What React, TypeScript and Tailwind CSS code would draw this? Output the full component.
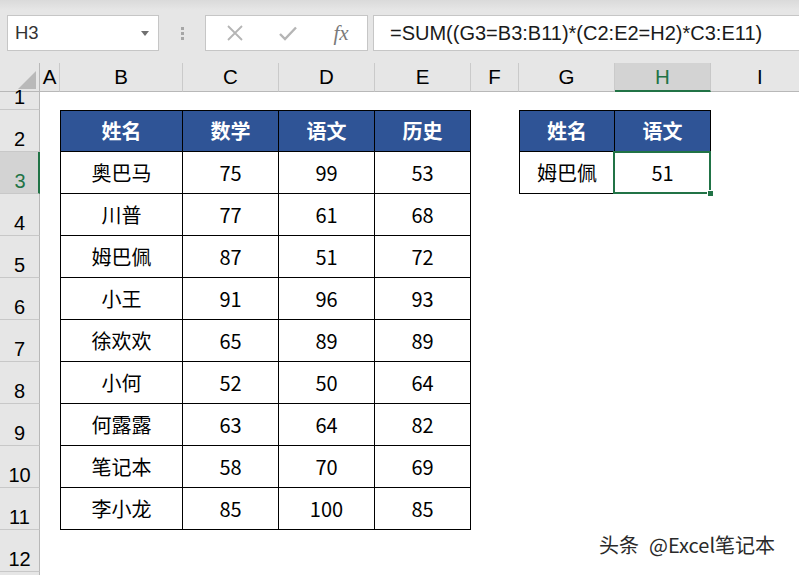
import React from "react";

const COLS = ["A", "B", "C", "D", "E", "F", "G", "H", "I"];

const DATA: [string, number, number, number][] = [
  ["奥巴马", 75, 99, 53],
  ["川普", 77, 61, 68],
  ["姆巴佩", 87, 51, 72],
  ["小王", 91, 96, 93],
  ["徐欢欢", 65, 89, 89],
  ["小何", 52, 50, 64],
  ["何露露", 63, 64, 82],
  ["笔记本", 58, 70, 69],
  ["李小龙", 85, 100, 85],
];

const HEAD = ["姓名", "数学", "语文", "历史"];

function cellContent(r: number, c: number): string {
  if (r === 2 && c >= 1 && c <= 4) return HEAD[c - 1];
  if (r >= 3 && r <= 11 && c >= 1 && c <= 4) {
    const row = DATA[r - 3];
    return String(row[c - 1]);
  }
  if (r === 2 && c === 6) return "姓名";
  if (r === 2 && c === 7) return "语文";
  if (r === 3 && c === 6) return "姆巴佩";
  if (r === 3 && c === 7) return "51";
  return "";
}

function isTable(r: number, c: number) {
  return (r >= 2 && r <= 11 && c >= 1 && c <= 4) || (r >= 2 && r <= 3 && c >= 6 && c <= 7);
}

function Cell({ r, c }: { r: number; c: number }) {
  if (!isTable(r, c)) return <div className="bg-white" />;
  const header = r === 2;
  const cls = [
    "relative flex items-center justify-center border-black border-r border-b text-[20px] font-['Noto_Sans_CJK_SC',sans-serif]",
    c === 1 || c === 6 ? "border-l" : "",
    r === 2 ? "border-t" : "",
    header ? "bg-[#2f5496] text-white font-bold" : "bg-white text-black",
  ].join(" ");
  const selected = r === 3 && c === 7;
  return (
    <div className={cls}>
      <span className="leading-none">{cellContent(r, c)}</span>
      {selected && (
        <>
          <div className="pointer-events-none absolute -left-[2px] -top-[1px] -right-[1px] -bottom-[1px] border-2 border-[#217346]" />
          <div className="absolute -right-[4px] -bottom-[4px] h-[7px] w-[7px] bg-[#217346] border border-white" />
        </>
      )}
    </div>
  );
}

export default function App() {
  const rows = Array.from({ length: 12 }, (_, i) => i + 1);
  return (
    <div className="relative h-[575px] w-[799px] overflow-hidden bg-white font-['Liberation_Sans',Arial,sans-serif]">
      {/* formula bar */}
      <div className="flex h-[63px] items-start bg-[linear-gradient(#dadada,#e6e6e6_10px,#e6e6e6)] pl-[7px] pt-[15px]">
        <div className="flex h-[36px] w-[152px] items-center justify-between border border-[#c6c6c6] bg-white pl-[7px] pr-[9px]">
          <span className="text-[18.5px] text-[#333]">H3</span>
          <svg width="8" height="5" viewBox="0 0 8 5">
            <path d="M0 0 L8 0 L4 5 Z" fill="#707070" />
          </svg>
        </div>
        <div className="flex h-[36px] w-[46px] flex-col items-center justify-center gap-[2px]">
          <div className="h-[3px] w-[3px] bg-[#a6a6a6]" />
          <div className="h-[3px] w-[3px] bg-[#a6a6a6]" />
          <div className="h-[3px] w-[3px] bg-[#a6a6a6]" />
        </div>
        <div className="flex h-[36px] w-[163px] items-center border border-[#c6c6c6] bg-white">
          <div className="flex w-[55px] justify-center pl-[2px]">
            <svg width="16" height="16" viewBox="0 0 16 16">
              <path d="M1 1 L15 15 M15 1 L1 15" stroke="#b5b5b5" strokeWidth="1.8" />
            </svg>
          </div>
          <div className="flex w-[54px] justify-center">
            <svg width="18" height="15" viewBox="0 0 18 15">
              <path d="M1 8 L6 13 L17 1.5" stroke="#b5b5b5" strokeWidth="2.4" fill="none" />
            </svg>
          </div>
          <div className="flex w-[52px] justify-center">
            <span className="font-['Liberation_Serif',serif] text-[21px] italic leading-none text-[#7a7a7a]">fx</span>
          </div>
        </div>
        <div className="ml-[5px] flex h-[36px] flex-1 items-center border border-r-0 border-[#c6c6c6] bg-white pl-[16px]">
          <span className="whitespace-nowrap text-[20px] text-[#1a1a1a]">=SUM((G3=B3:B11)*(C2:E2=H2)*C3:E11)</span>
        </div>
      </div>

      {/* sheet */}
      <div className="grid grid-cols-[40px_20px_123px_96px_96px_96px_48px_96px_96px_1fr] grid-rows-[29px_18px_repeat(11,42px)_3px]">
        {/* corner */}
        <div className="flex items-end justify-end border-b border-r border-[#b8b8b8] bg-[#e6e6e6] pb-[2px] pr-[3px]">
          <svg width="18" height="18" viewBox="0 0 18 18">
            <path d="M18 0 L18 18 L0 18 Z" fill="#b9b9b9" />
          </svg>
        </div>
        {COLS.map((l, i) =>
          l === "H" ? (
            <div
              key={l}
              className="flex items-end justify-center border-b-2 border-r border-b-[#217346] border-r-[#c8c8c8] bg-[#d3d3d3] pb-[3px] text-[20.5px] leading-none text-[#217346]"
            >
              {l}
            </div>
          ) : (
            <div
              key={l}
              className={
                i === 8
                  ? "flex items-end justify-start border-b border-[#b8b8b8] bg-[#e6e6e6] pb-[4px] pl-[46px] text-[20.5px] leading-none text-black"
                  : "flex items-end justify-center border-b border-r border-b-[#b8b8b8] border-r-[#cacaca] bg-[#e6e6e6] pb-[4px] text-[20.5px] leading-none text-black"
              }
            >
              {l}
            </div>
          )
        )}
        {rows.map((r) => (
          <React.Fragment key={r}>
            {r === 3 ? (
              <div className="flex items-end justify-center border-b border-r-2 border-b-[#c8c8c8] border-r-[#217346] bg-[#d3d3d3] pb-[2px] pl-[2px] text-[20px] leading-none text-[#217346]">
                {r}
              </div>
            ) : (
              <div className="flex items-end justify-center border-b border-r border-b-[#c8c8c8] border-r-[#b8b8b8] bg-[#e6e6e6] pb-[2px] text-[20px] leading-none text-black">
                {r}
              </div>
            )}
            {COLS.map((_, c) => (
              <Cell key={c} r={r} c={c} />
            ))}
          </React.Fragment>
        ))}
        <div className="border-r border-[#b8b8b8] bg-[#e6e6e6]" />
      </div>

      {/* watermark */}
      <div className="absolute left-[599px] top-[535px] whitespace-nowrap font-['Noto_Sans_CJK_SC',sans-serif] text-[20px] leading-none text-[#2a2a2a] [text-shadow:0_0_2px_#ffffff,0_0_1px_#ffffff]">
        头条<span className="inline-block w-[10px]" />@Excel笔记本
      </div>
    </div>
  );
}
